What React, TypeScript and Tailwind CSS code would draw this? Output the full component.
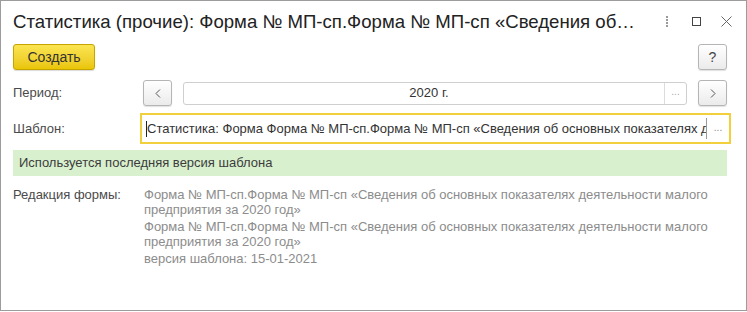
import React from 'react'

const font = { fontFamily: '"Liberation Sans", Arial, sans-serif' }

const GrayButton = ({ children, className = '' }: { children: React.ReactNode; className?: string }) => (
  <div
    className={`flex h-[26px] w-[29px] shrink-0 items-center justify-center rounded-[3px] border border-[#b5b5b5] bg-gradient-to-b from-white to-[#ebebeb] text-[#444] shadow-[0_1px_1px_rgba(0,0,0,0.12)] ${className}`}
  >
    {children}
  </div>
)

export default function App() {
  return (
    <div className="h-[312px] w-[747px] bg-white" style={font}>
      <div className="flex h-[311px] flex-col border border-[#9c9c9c] bg-white">
        {/* Title bar */}
        <div className="flex items-center pl-[12px] pr-[14px] pt-[10px]">
          <div className="h-[21px] min-w-0 flex-1 truncate text-[18.6px] leading-[21px] text-[#222]">
            Статистика (прочие): Форма № МП-сп.Форма № МП-сп «Сведения об…
          </div>
          <div className="flex shrink-0 items-center">
            <div className="mr-[24px] flex flex-col gap-[1px]">
              <span className="h-[2px] w-[2px] bg-[#9a9a9a]" />
              <span className="h-[2px] w-[2px] bg-[#9a9a9a]" />
              <span className="h-[2px] w-[2px] bg-[#9a9a9a]" />
              <span className="h-[2px] w-[2px] bg-[#9a9a9a]" />
            </div>
            <div className="mr-[20px] h-[9px] w-[9px] border border-[#444]" />
            <svg width="11" height="11" viewBox="0 0 11 11">
              <path d="M0.5 0.5 L10.5 10.5 M10.5 0.5 L0.5 10.5" stroke="#666" strokeWidth="1" />
            </svg>
          </div>
        </div>

        {/* Toolbar */}
        <div className="mt-[12px] flex items-center pl-[12px] pr-[19px]">
          <div className="flex h-[26px] w-[82px] items-center justify-center rounded-[3px] border border-[#c6a400] bg-gradient-to-b from-[#fbe550] to-[#eac500] text-[14px] text-[#333] shadow-[0_1px_1px_rgba(0,0,0,0.15)]">
            Создать
          </div>
          <div className="flex-1" />
          <GrayButton className="text-[14px]">?</GrayButton>
        </div>

        {/* Period */}
        <div className="mt-[10px] flex items-center pl-[12px] pr-[19px] text-[13px]">
          <div className="w-[130px] shrink-0 text-[#4a4a4a]">Период:</div>
          <GrayButton>
            <svg width="6" height="9" viewBox="0 0 6 9">
              <path d="M5 0.5 L1 4.5 L5 8.5" stroke="#555" fill="none" strokeWidth="1" />
            </svg>
          </GrayButton>
          <div className="mx-[11px] flex h-[23px] min-w-0 flex-1 items-center rounded-[3px] border border-[#cfcfcf] bg-white">
            <div className="flex-1 pl-[10px] text-center text-[#333]">2020 г.</div>
            <div className="flex h-full w-[22px] items-center justify-center border-l border-[#dcdcdc] pb-[3px] text-[10px] text-[#aaa]">
              ...
            </div>
          </div>
          <GrayButton>
            <svg width="6" height="9" viewBox="0 0 6 9">
              <path d="M1 0.5 L5 4.5 L1 8.5" stroke="#555" fill="none" strokeWidth="1" />
            </svg>
          </GrayButton>
        </div>

        {/* Template */}
        <div className="mt-[7px] flex items-center pl-[12px] pr-[15px] text-[13px]">
          <div className="w-[127px] shrink-0 text-[#4a4a4a]">Шаблон:</div>
          <div className="flex h-[31px] min-w-0 flex-1 items-center border-2 border-[#f2d03c] bg-white">
            <div className="flex h-full min-w-0 flex-1 items-center overflow-hidden pl-[4px]">
              <span className="h-[16px] w-[1px] shrink-0 bg-[#222]" />
              <span className="min-w-0 overflow-hidden whitespace-nowrap text-[#333]">
                Статистика: Форма Форма № МП-сп.Форма № МП-сп «Сведения об основных показателях деятельности малого предприятия за 2020 год»
              </span>
            </div>
            <div className="flex h-[21px] w-[23px] shrink-0 items-center justify-center border-l border-[#9a9a9a] pb-[3px] text-[10px] text-[#888]">
              ...
            </div>
          </div>
        </div>

        {/* Status */}
        <div className="ml-[12px] mr-[19px] mt-[6px] flex h-[26px] items-center bg-[#d9f0cf] pl-[6px] text-[13px] text-[#3c3c3c]">
          Используется последняя версия шаблона
        </div>

        {/* Form edition */}
        <div className="mt-[11px] flex pl-[12px] pr-[19px] text-[13px] leading-[15px]">
          <div className="w-[131px] shrink-0 text-[#4a4a4a]">Редакция формы:</div>
          <div className="flex min-w-0 flex-1 flex-col gap-[2px] text-[#8c8c8c]">
            <div>
              Форма № МП-сп.Форма № МП-сп «Сведения об основных показателях деятельности малого предприятия за 2020 год»
            </div>
            <div>
              Форма № МП-сп.Форма № МП-сп «Сведения об основных показателях деятельности малого предприятия за 2020 год»
            </div>
            <div>версия шаблона: 15-01-2021</div>
          </div>
        </div>
      </div>
    </div>
  )
}
